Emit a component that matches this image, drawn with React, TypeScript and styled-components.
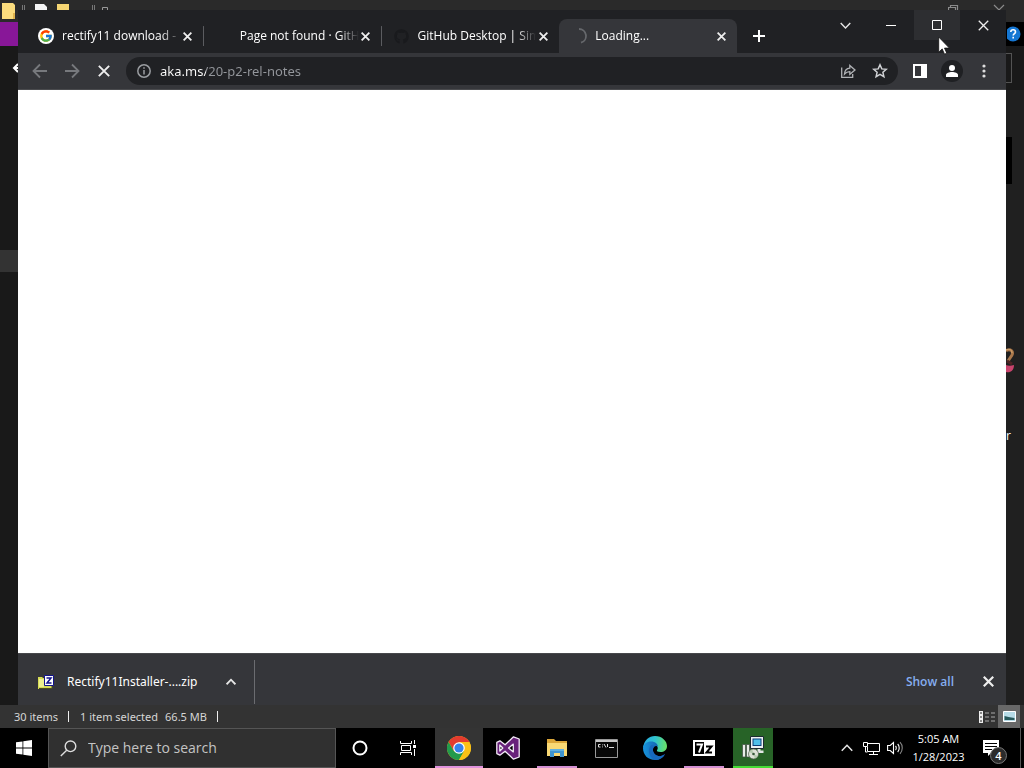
import React from "react";
import styled, { createGlobalStyle, css } from "styled-components";
import { FcGoogle } from "react-icons/fc";
import { FaGithub } from "react-icons/fa";

const font = '"Open Sans", "Noto Sans", sans-serif';
const wideFont = '"Noto Sans", "Open Sans", sans-serif';
const surface = "#35363a";
const dark = "#202124";

const GlobalStyle = createGlobalStyle`
  *, *::before, *::after { box-sizing: border-box; }
  body { margin: 0; background: #000; font-family: ${font}; overflow: hidden; }
  button, input { font-family: inherit; border: 0; padding: 0; background: none; color: inherit; outline: none; }
  svg { display: block; flex: none; }
`;

const Desktop = styled.div`
  display: flex;
  flex-direction: column;
  min-height: 100vh;
`;

const Explorer = styled.section`
  position: relative;
  flex: 1;
  display: flex;
  flex-direction: column;
  background: #1c1c1c;
`;

const ExplorerTitle = styled.header`
  display: flex;
  align-items: flex-start;
  justify-content: space-between;
  height: 22px;
  background: #2a2a2a;
`;

const TitleGroup = styled.div`
  display: flex;
  align-items: flex-start;
  padding: 3px 18px 0 2px;
`;

const Ribbon = styled.nav`
  display: flex;
  justify-content: space-between;
  height: 24px;
  background: #000;
`;

const FileTab = styled.button`
  width: 56px;
  background: #881798;
`;

const HelpButton = styled.button`
  width: 18px;
  display: grid;
  place-items: center;
`;

const AddressRow = styled.div`
  display: flex;
  align-items: center;
  gap: 20px;
  height: 44px;
  padding: 0 12px;
  background: #191919;
`;

const AddressBox = styled.div`
  flex: 1;
  height: 30px;
  border: 1px solid #535353;
`;

const ExplorerBody = styled.div`
  flex: 1;
  display: flex;
  justify-content: space-between;
`;

const NavPane = styled.div`
  width: 18px;
  padding-top: 160px;
  background: #191919;
`;

const NavItem = styled.div`
  height: 22px;
  background: #333;
`;

const FilePane = styled.div`
  width: 18px;
  padding-top: 47px;
  background: #202020;
  color: #fff;
  font-size: 12px;
  line-height: 16px;
`;

const Thumb = styled.div`
  width: 6px;
  height: 47px;
  margin-bottom: 164px;
  background: #000;
`;

const FileLabel = styled.div`
  margin-top: 54px;
`;

const StatusBar = styled.footer`
  display: flex;
  align-items: stretch;
  height: 23px;
  padding: 0 4px 0 14px;
  background: #333;
  color: #d6d6d6;
  font-family: ${wideFont};
  font-size: 11px;
  line-height: 23px;
`;

const StatusText = styled.span<{ $divided?: boolean }>`
  margin-right: ${(p) => (p.$divided ? 11 : 7)}px;
  ${(p) =>
    p.$divided &&
    css`
      padding-right: 11px;
      background: linear-gradient(#eee, #eee) right center / 1px 11px no-repeat;
    `}
`;

const ViewButtons = styled.div`
  display: flex;
  margin-left: auto;
`;

const ViewButton = styled.button<{ $active?: boolean }>`
  display: grid;
  place-items: center;
  width: 22px;
  background: ${(p) => (p.$active ? "#686868" : "none")};
`;

const Browser = styled.section`
  position: absolute;
  inset: 10px 18px 23px;
  display: flex;
  flex-direction: column;
  background: ${dark};
  color: #fff;
`;

const TabStrip = styled.div`
  display: flex;
  height: 43px;
  padding-left: 8px;
`;

const Tabs = styled.div`
  display: flex;
  flex: 1 1 0;
  min-width: 0;
  max-width: 711px;
  padding-top: 9px;
`;

const Tab = styled.div<{ $active?: boolean; $line?: boolean }>`
  flex: 1 1 0;
  min-width: 0;
  display: flex;
  align-items: center;
  padding: 0 9px 0 12px;
  border-radius: 8px 8px 0 0;
  background: ${(p) =>
    p.$active
      ? surface
      : p.$line
        ? "linear-gradient(#5b5c60, #5b5c60) right center / 1px 20px no-repeat"
        : "none"};
`;

const Favicon = styled.span`
  display: grid;
  place-items: center;
  flex: 0 0 16px;
  height: 16px;
  margin-right: 8px;
  border-radius: 8px;
`;

const GoogleFavicon = styled(Favicon)`
  background: #fff;
`;

const TabTitle = styled.span`
  flex: 1;
  min-width: 0;
  white-space: nowrap;
  font-size: 12px;
  line-height: 18px;
  mask-image: linear-gradient(90deg, #000 calc(100% - 20px), transparent);
`;

const IconButton = styled.button<{ $w?: number; $h?: number }>`
  display: grid;
  place-items: center;
  flex: none;
  width: ${(p) => p.$w ?? 32}px;
  height: ${(p) => p.$h ?? 32}px;
`;

const NewTab = styled(IconButton)`
  margin: 12px 0 0 8px;
`;

const WindowControls = styled.div`
  display: flex;
  flex: none;
  margin-left: auto;
`;

const ControlButton = styled.button<{ $hover?: boolean }>`
  display: grid;
  place-items: center;
  width: 46px;
  height: 30px;
  background: ${(p) => (p.$hover ? "#2d2e31" : "none")};
`;

const Toolbar = styled.div`
  display: flex;
  align-items: center;
  height: 37px;
  padding: 0 6px;
  background: ${surface};
  border-bottom: 1px solid #4a4b4e;
`;

const Omnibox = styled.div`
  flex: 1;
  display: flex;
  align-items: center;
  height: 28px;
  margin: 0 6px;
  padding: 0 2px 0 10px;
  border-radius: 14px;
  background: ${dark};
`;

const UrlInput = styled.input`
  flex: 1;
  min-width: 0;
  margin-left: 8px;
  font-family: ${wideFont};
  font-size: 13px;
  line-height: 20px;
  color: #e8eaed;
  background: linear-gradient(90deg, #fff 46px, #94979c 46px);
  -webkit-background-clip: text;
  background-clip: text;
  -webkit-text-fill-color: transparent;
`;

const Avatar = styled.span`
  display: grid;
  place-items: center;
  width: 22px;
  height: 22px;
  border-radius: 11px;
  background: #1f2023;
`;

const Page = styled.main`
  flex: 1;
  background: #fff;
`;

const DownloadBar = styled.div`
  display: flex;
  align-items: center;
  height: 52px;
  padding: 4px 2px 0 20px;
  background: ${surface};
  border-top: 1px solid #47484b;
`;

const DownloadItem = styled.button`
  display: flex;
  align-items: center;
  gap: 13px;
  min-width: 163px;
  font-family: ${wideFont};
  font-size: 12px;
  line-height: 20px;
  white-space: nowrap;
`;

const DownloadMenu = styled(IconButton)`
  margin-left: 14px;
`;

const Divider = styled.span`
  width: 1px;
  height: 44px;
  margin-left: 7px;
  background: #6b6c70;
`;

const ShowAll = styled.a`
  margin-left: auto;
  margin-right: 18px;
  color: #86aef0;
  font-size: 12px;
  font-weight: 600;
  line-height: 20px;
  text-decoration: none;
`;

const Pointer = styled.svg`
  position: absolute;
  right: 74px;
  top: 36px;
`;

const Taskbar = styled.footer`
  display: flex;
  height: 40px;
  background: #000;
  color: #fff;
`;

const SearchBox = styled.label`
  display: flex;
  align-items: center;
  gap: 11px;
  flex: 0 1 288px;
  padding-left: 11px;
  background: #303030;
  border: 1px solid #555;
`;

const SearchInput = styled.input`
  flex: 1;
  min-width: 0;
  font-size: 14px;
  line-height: 20px;
  &::placeholder { color: #c4c4c4; opacity: 1; }
`;

const AppRow = styled.div`
  display: flex;
  gap: 1px;
  margin-left: 3px;
`;

const TaskButton = styled.button<{ $state?: "active" | "open" | "progress" }>`
  display: grid;
  place-items: center;
  width: 48px;
  height: 40px;
  ${(p) => p.$state === "active" && css`background: linear-gradient(#e092dc, #e092dc) bottom / 48px 2px no-repeat, #343434;`}
  ${(p) => p.$state === "open" && css`background: linear-gradient(#d28fd2, #d28fd2) bottom / 40px 2px no-repeat;`}
  ${(p) =>
    p.$state === "progress" &&
    css`
      background:
        linear-gradient(#45dc35, #45dc35) bottom / 40px 2px no-repeat,
        linear-gradient(#276327, #276327) center / 40px 40px no-repeat;
    `}
`;

const Tray = styled.div`
  display: flex;
  align-items: center;
  margin-left: auto;
`;

const Clock = styled.button`
  width: 63px;
  font-size: 11px;
  line-height: 18px;
  text-align: center;
  white-space: nowrap;
`;

const Notifications = styled.button`
  position: relative;
  display: grid;
  place-items: center;
  width: 50px;
  height: 40px;
  padding-right: 8px;
`;

const Badge = styled.span`
  position: absolute;
  right: 13px;
  bottom: 4px;
  width: 17px;
  height: 17px;
  border: 1px solid #777;
  border-radius: 9px;
  background: #2b2b2b;
  font-size: 11px;
  font-weight: 600;
  line-height: 15px;
`;

const ShowDesktop = styled.button`
  width: 4px;
  height: 40px;
  border-left: 1px solid #555;
`;

const Cross = ({ size = 9, w = 2 }: { size?: number; w?: number }) => (
  <svg width={size} height={size} viewBox="0 0 10 10" stroke="#eee" strokeWidth={w} fill="none">
    <path d="M.7.7l8.6 8.6M9.3.7L.7 9.3" />
  </svg>
);

const Arrow = ({ flip }: { flip?: boolean }) => (
  <svg width="16" height="16" viewBox="0 0 16 16" fill="none" stroke="#77797d" strokeWidth="1.8">
    <path d={flip ? "M1 8h13M8 1.5L14.5 8 8 14.5" : "M15 8H2M8 1.5L1.5 8 8 14.5"} />
  </svg>
);

const Chevron = ({ up, w = 1.4, size = 11 }: { up?: boolean; w?: number; size?: number }) => (
  <svg width={size} height={size} viewBox="0 0 11 11" fill="none" stroke="#e6e6e6" strokeWidth={w}>
    <path d={up ? "M.7 8l4.8-5 4.8 5" : "M.7 3l4.8 5 4.8-5"} />
  </svg>
);

const ChromeLogo = () => (
  <svg width="24" height="24" viewBox="0 0 24 24">
    <circle cx="12" cy="12" r="12" fill="#fbc116" />
    <path d="M1.6 6A12 12 0 0 1 22.4 6H12L6.8 15z" fill="#e33b2e" />
    <path d="M1.6 6A12 12 0 0 0 12 24L17.2 15 12 17 6.8 15z" fill="#229a4c" />
    <path d="M12 6.2h10.5A12 12 0 0 1 12 24l5.2-9z" fill="#fbc116" />
    <circle cx="12" cy="12" r="5.8" fill="#fff" />
    <circle cx="12" cy="12" r="4.6" fill="#3682ec" />
  </svg>
);

const StudioLogo = () => (
  <svg width="24" height="24" viewBox="0 0 24 24">
    <path
      d="M17.5.8L23.2 3v18l-5.7 2.2-8.4-8-5.2 4L.8 17.6V6.4l3.1-1.6 5.2 4zM17.3 8.1L12.6 12l4.7 3.9zM3.8 9v6l3-3z"
      fill="#68217a"
      stroke="#f2e9f6"
      strokeWidth="1.3"
      strokeLinejoin="round"
      fillRule="evenodd"
    />
  </svg>
);

const FilesLogo = () => (
  <svg width="22" height="20" viewBox="0 0 22 20">
    <path d="M1 1h7l2 2h11v14H1z" fill="#dca73a" />
    <path d="M1 5h20v13H1z" fill="#f9d975" />
    <path d="M4 11h14v8h-4v-4H8v4H4z" fill="#3f94cf" />
    <path d="M4 11h14v2H4z" fill="#61b0df" />
  </svg>
);

const ConsoleLogo = () => (
  <svg width="23" height="19" viewBox="0 0 23 19">
    <path d="M.5.5h22v18H.5z" fill="#080808" stroke="#999" />
    <path d="M1 1h21v2H1z" fill="#c8c8c8" />
    <path
      d="M5.500 5.500h-2v2.500h2M7.500 5.500v.8M7.500 7.500v.8M9 5l2 3.500M12.500 5v3M14 8.500h5"
      fill="none"
      stroke="#ddd"
    />
  </svg>
);

const EdgeLogo = () => (
  <svg width="24" height="24" viewBox="0 0 24 24">
    <defs>
      <linearGradient id="edgeTop" x1="0" x2="1" y1=".3" y2=".4">
        <stop offset="0" stopColor="#28a9e5" />
        <stop offset=".5" stopColor="#30c4cd" />
        <stop offset="1" stopColor="#69df67" />
      </linearGradient>
      <linearGradient id="edgeSide" x1="0" x2="1">
        <stop offset="0" stopColor="#1794dd" />
        <stop offset="1" stopColor="#164f9c" />
      </linearGradient>
    </defs>
    <path d="M0 12C1 4 6 0 12 0c7 0 12 5 12 10 0 4-3 6-6.500 6-3 0-4-1-3.500-2 2-2 0-6-5-6C4.500 8 1 10 0 12z" fill="url(#edgeTop)" />
    <path d="M0 12c.5-4 4-6.500 8-6.500 4.500 0 7 2.500 7 5.500-1.200-1.700-4.500-1-5 2-.7 4.500 4 8 8 7 2-.5 3-1.500 4-2-2 4-6 6-10 6C5 24 0 19 0 12z" fill="url(#edgeSide)" />
    <path d="M8.500 9C5 11 4 20 12 24c4.500 0 8-2 10-6-1 .5-2 1.500-4 2-4 1-8.700-2.500-8-7 .2-1.200.8-2 1.500-2.400C11 9.500 10 9 8.500 9z" fill="#1769bd" />
  </svg>
);

const SevenZipLogo = () => (
  <svg width="22" height="16" viewBox="0 0 22 16" fill="none">
    <path d="M0 0h22v16H0z" fill="#fff" />
    <path d="M2 2h9v12H2z" fill="#000" />
    <path d="M3.500 4.500H9L6 12.500" stroke="#fff" strokeWidth="2" />
    <path d="M13 6.500h5.500L13.500 12.500H19" stroke="#000" strokeWidth="2" />
  </svg>
);

const InstallerLogo = () => (
  <svg width="24" height="24" viewBox="0 0 24 24">
    <path d="M9.500.5h13v12h-13z" fill="#edf1f4" stroke="#1c2b31" />
    <path d="M11.500 2.500h9v7.500h-9z" fill="#0d3f78" />
    <path d="M12.500 3.500h7v5.500h-7z" fill="#4fc0ea" />
    <path d="M16.500 13h3v1.500h3v2.500h-6z" fill="#e2e6e6" />
    <path d="M1.500 8.500h3V21h-3zM5.500 8.500h3V21h-3z" fill="#e9ece9" stroke="#3d4b40" strokeWidth=".7" />
    <circle cx="12.500" cy="18" r="5" fill="#dde2d6" stroke="#4e5d4c" strokeWidth=".7" />
    <path d="M12.500 18L8.200 16a5 5 0 0 1 3-2.500zM12.500 18l4.300 2a5 5 0 0 1-3 2.500z" fill="#b5cbaf" />
    <circle cx="12.500" cy="18" r="1.300" fill="#37583a" />
  </svg>
);

const ZipIcon = () => (
  <svg width="16" height="16" viewBox="0 0 16 16">
    <path d="M0 3h4l1 1h9v11H0z" fill="#d7dd55" />
    <path d="M1 5h5v8H1z" fill="#eef08f" />
    <path d="M6.500 1.500h9v10h-9z" fill="#fff" stroke="#14148c" />
    <path d="M8.500 4H13L9 9h4.500" fill="none" stroke="#14148c" strokeWidth="1.500" />
    <path d="M1 14.500h13V12" fill="none" stroke="#4c4c20" />
  </svg>
);

const CloseTab = ({ name }: { name: string }) => (
  <IconButton $w={14} $h={16} aria-label={`Close ${name}`}>
    <Cross />
  </IconButton>
);

export default function App() {
  return (
    <Desktop>
      <GlobalStyle />
      <Explorer>
        <ExplorerTitle>
          <TitleGroup>
            <svg width="108" height="17" viewBox="0 0 108 17">
              <path d="M0 0h11l2 2v14H0z" fill="#fbdc7d" />
              <path d="M11 10h2v6h-2z" fill="#e0b34c" />
              <path d="M20.500 2v10M22.500 2v10M90.500 2v10M92.500 2v10" stroke="#777" />
              <path d="M33 1h9l3 3v10H33z" fill="#f4f4f4" />
              <path d="M55 1h12v11H55z" fill="#f6d673" />
              <path d="M100.500 12V4.500h5V12" fill="none" stroke="#999" />
            </svg>
          </TitleGroup>
          <TitleGroup>
            <svg width="58" height="10" viewBox="0 0 58 10" fill="none" stroke="#8b8b8b" strokeWidth="1.200">
              <path d="M.5 10V4.500h7V10M2.500 4V2.500h7V8M46 2l5 5 5-5" />
            </svg>
          </TitleGroup>
        </ExplorerTitle>
        <Ribbon>
          <FileTab aria-label="File" />
          <HelpButton aria-label="Help">
            <svg width="16" height="16" viewBox="0 0 16 16">
              <circle cx="6" cy="8" r="7.500" fill="#1577d3" />
              <path d="M3.800 6c0-3 4.700-3 4.700 0 0 1.600-2.300 1.700-2.300 3.500M6.200 10.800v1.700" fill="none" stroke="#fff" strokeWidth="1.600" />
            </svg>
          </HelpButton>
        </Ribbon>
        <AddressRow>
          <svg width="16" height="10" viewBox="0 0 16 10" stroke="#fff" strokeWidth="2" fill="none">
            <path d="M15 5H2M6 1L2 5l4 4" />
          </svg>
          <AddressBox />
        </AddressRow>
        <ExplorerBody>
          <NavPane>
            <NavItem />
          </NavPane>
          <FilePane>
            <Thumb />
            <svg width="10" height="26" viewBox="0 0 10 26" fill="none">
              <path d="M0 2.500c5-2 7.500 1 6 4.500L2 13" stroke="#a9774b" strokeWidth="3" />
              <path d="M0 2c4-1.500 6 0 6 3" stroke="#d8ab74" strokeWidth="1" />
              <path d="M1 13l5 3" stroke="#4a2424" strokeWidth="3" />
              <path d="M0 17c2 1 5 1 8 0 0 6-4 8-8 7z" fill="#c9446d" />
            </svg>
            <FileLabel>r</FileLabel>
          </FilePane>
        </ExplorerBody>
        <StatusBar>
          <StatusText $divided>30 items</StatusText>
          <StatusText>1 item selected</StatusText>
          <StatusText $divided>66.5 MB</StatusText>
          <ViewButtons>
            <ViewButton aria-label="Details view">
              <svg width="16" height="12" viewBox="0 0 16 12">
                <path d="M0 0h4v12H0z" fill="#eee" />
                <path d="M1 2h2M1 6h2M1 10h2" stroke="#222" />
                <path d="M6 2h4M12 2h4M6 6h4M12 6h4M6 10h4M12 10h4" stroke="#aaa" />
              </svg>
            </ViewButton>
            <ViewButton $active aria-label="Large icons view">
              <svg width="13" height="11" viewBox="0 0 13 11">
                <path d="M.5.5h12v10H.5z" fill="#b7dce8" stroke="#fff" />
                <path d="M1.500 5l4 1 6 1v2h-10z" fill="#285a5c" />
              </svg>
            </ViewButton>
          </ViewButtons>
        </StatusBar>

        <Browser>
          <TabStrip>
            <Tabs>
              <Tab $line>
                <GoogleFavicon>
                  <FcGoogle size={14} />
                </GoogleFavicon>
                <TabTitle>rectify11 download -</TabTitle>
                <CloseTab name="rectify11 download" />
              </Tab>
              <Tab $line>
                <Favicon />
                <TabTitle>Page not found · GitH</TabTitle>
                <CloseTab name="Page not found" />
              </Tab>
              <Tab>
                <Favicon>
                  <FaGithub size={15} color="#191a1d" />
                </Favicon>
                <TabTitle>GitHub Desktop | Sim</TabTitle>
                <CloseTab name="GitHub Desktop" />
              </Tab>
              <Tab $active>
                <Favicon>
                  <svg width="16" height="16" viewBox="0 0 16 16" fill="none" stroke="#66686c" strokeWidth="1.800">
                    <path d="M8 1a7 7 0 0 1 2 13.700" />
                  </svg>
                </Favicon>
                <TabTitle>Loading...</TabTitle>
                <CloseTab name="Loading" />
              </Tab>
            </Tabs>
            <NewTab $w={28} $h={28} aria-label="New tab">
              <svg width="12" height="12" viewBox="0 0 12 12" stroke="#fff" strokeWidth="2">
                <path d="M6 0v12M0 6h12" />
              </svg>
            </NewTab>
            <WindowControls>
              <ControlButton aria-label="Search tabs">
                <Chevron />
              </ControlButton>
              <ControlButton aria-label="Minimize">
                <svg width="10" height="10" viewBox="0 0 10 10" stroke="#fff">
                  <path d="M0 5.500h10" />
                </svg>
              </ControlButton>
              <ControlButton $hover aria-label="Maximize">
                <svg width="10" height="10" viewBox="0 0 10 10" stroke="#fff" fill="none">
                  <path d="M.5.5h9v9h-9z" />
                </svg>
              </ControlButton>
              <ControlButton aria-label="Close">
                <Cross size={11} w={1.2} />
              </ControlButton>
            </WindowControls>
          </TabStrip>
          <Toolbar>
            <IconButton aria-label="Back"><Arrow /></IconButton>
            <IconButton aria-label="Forward"><Arrow flip /></IconButton>
            <IconButton aria-label="Stop loading"><Cross size={12} w={1.6} /></IconButton>
            <Omnibox>
              <svg width="16" height="16" viewBox="0 0 16 16" fill="none" stroke="#9a9da1" strokeWidth="1.500">
                <circle cx="8" cy="8" r="6.200" />
                <path d="M8 7v4.500M8 4.300v1.500" />
              </svg>
              <UrlInput aria-label="Address" defaultValue="aka.ms/20-p2-rel-notes" />
              <IconButton aria-label="Share this page">
                <svg width="16" height="16" viewBox="0 0 16 16" fill="none" stroke="#b0b2b5" strokeWidth="1.300">
                  <path d="M1.700 4.500v9.800h11V11M4.500 11c.3-3.800 2.200-5.500 5.300-5.800V2.400L15 7l-5.200 4.300V8.600C7.500 8.600 6 9.300 4.500 11z" />
                </svg>
              </IconButton>
              <IconButton aria-label="Bookmark this tab">
                <svg width="16" height="16" viewBox="0 0 16 16" fill="none" stroke="#d0d2d5" strokeWidth="1.500">
                  <path d="M8 1.800l1.800 4.100 4.500.4-3.400 3 1 4.400L8 11.400l-3.900 2.300 1-4.400-3.400-3 4.500-.4z" />
                </svg>
              </IconButton>
            </Omnibox>
            <IconButton aria-label="Side panel">
              <svg width="14" height="14" viewBox="0 0 14 14">
                <path d="M0 0h14v14H0zM2 2v10h6V2z" fill="#fff" fillRule="evenodd" />
              </svg>
            </IconButton>
            <IconButton aria-label="Profile">
              <Avatar>
                <svg width="12" height="12" viewBox="0 0 12 12" fill="#fff">
                  <circle cx="6" cy="3" r="3" />
                  <path d="M0 12v-2c0-4 12-4 12 0v2z" />
                </svg>
              </Avatar>
            </IconButton>
            <IconButton aria-label="Menu">
              <svg width="4" height="14" viewBox="0 0 4 14" fill="#ddd">
                <circle cx="2" cy="2" r="1.600" />
                <circle cx="2" cy="7" r="1.600" />
                <circle cx="2" cy="12" r="1.600" />
              </svg>
            </IconButton>
          </Toolbar>
          <Page />
          <DownloadBar>
            <DownloadItem>
              <ZipIcon />
              Rectify11Installer-....zip
            </DownloadItem>
            <DownloadMenu aria-label="Download options">
              <Chevron up w={2} size={10} />
            </DownloadMenu>
            <Divider />
            <ShowAll href="#downloads">Show all</ShowAll>
            <IconButton aria-label="Close downloads bar">
              <Cross size={11} />
            </IconButton>
          </DownloadBar>
        </Browser>
        <Pointer width="12" height="19" viewBox="0 0 12 19">
          <path d="M.7 1v15.200l3.500-3.300 2.300 5.300 2.300-1-2.300-5.100h4.900z" fill="#fff" stroke="#111" strokeWidth=".8" />
        </Pointer>
      </Explorer>

      <Taskbar>
        <TaskButton aria-label="Start">
          <svg width="16" height="16" viewBox="0 0 16 16" fill="#fff">
            <path d="M0 2.300L6.500 1.400v6.200H0zM7.300 1.300L16 0v7.600H7.300zM0 8.400h6.500v6.200L0 13.700zM7.300 8.400H16V16l-8.700-1.300z" />
          </svg>
        </TaskButton>
        <SearchBox>
          <svg width="17" height="17" viewBox="0 0 17 17" fill="none" stroke="#ddd" strokeWidth="1.400">
            <circle cx="10.500" cy="6.300" r="5.300" />
            <path d="M6.700 10.200L.8 16" />
          </svg>
          <SearchInput aria-label="Search" placeholder="Type here to search" />
        </SearchBox>
        <TaskButton aria-label="Cortana">
          <svg width="16" height="16" viewBox="0 0 16 16" fill="none" stroke="#fff" strokeWidth="2">
            <circle cx="8" cy="8" r="6.500" />
          </svg>
        </TaskButton>
        <TaskButton aria-label="Task view">
          <svg width="17" height="16" viewBox="0 0 17 16" fill="none" stroke="#fff">
            <path d="M.5 1v2.500h11V1M.5 15v-2.500h11V15M1.500 5.500h9v5h-9zM14.500 0v4M14.500 9v7" />
            <path d="M13 5h3v3h-3z" fill="#fff" stroke="none" />
          </svg>
        </TaskButton>
        <AppRow>
          <TaskButton $state="active" aria-label="Chrome"><ChromeLogo /></TaskButton>
          <TaskButton aria-label="Visual Studio"><StudioLogo /></TaskButton>
          <TaskButton $state="open" aria-label="File Explorer"><FilesLogo /></TaskButton>
          <TaskButton aria-label="Command Prompt"><ConsoleLogo /></TaskButton>
          <TaskButton aria-label="Edge"><EdgeLogo /></TaskButton>
          <TaskButton $state="open" aria-label="7-Zip"><SevenZipLogo /></TaskButton>
          <TaskButton $state="progress" aria-label="Installer"><InstallerLogo /></TaskButton>
        </AppRow>
        <Tray>
          <IconButton $w={24} aria-label="Show hidden icons">
            <Chevron up size={12} />
          </IconButton>
          <IconButton $w={24} aria-label="Network">
            <svg width="17" height="15" viewBox="0 0 17 15" fill="none" stroke="#fff">
              <path d="M4.500 2.500h12v8h-12V6M10.500 11v3M6 13.500h9M.5 1.500h4v4h-4zM2.500 6v5h2" />
            </svg>
          </IconButton>
          <IconButton $w={24} aria-label="Volume">
            <svg width="17" height="14" viewBox="0 0 17 14" fill="none" stroke="#fff" strokeWidth="1.100">
              <path d="M.6 4.500h2.600L6.500 1.500v11L3.200 9.500H.6zM8.500 5c1 1 1 3 0 4M10.700 3c2 2 2 6 0 8" />
              <path d="M13 1.200c3 3 3 8.600 0 11.600" stroke="#888" />
            </svg>
          </IconButton>
          <Clock>
            5:05 AM
            <br />
            1/28/2023
          </Clock>
          <Notifications aria-label="4 notifications">
            <svg width="16" height="16" viewBox="0 0 16 16">
              <path d="M0 0h16v13H8l-3 3v-3H0z" fill="#fff" />
              <path d="M2 3.500h12M2 6.500h12M2 9.500h7" stroke="#000" />
            </svg>
            <Badge>4</Badge>
          </Notifications>
          <ShowDesktop aria-label="Show desktop" />
        </Tray>
      </Taskbar>
    </Desktop>
  );
}
